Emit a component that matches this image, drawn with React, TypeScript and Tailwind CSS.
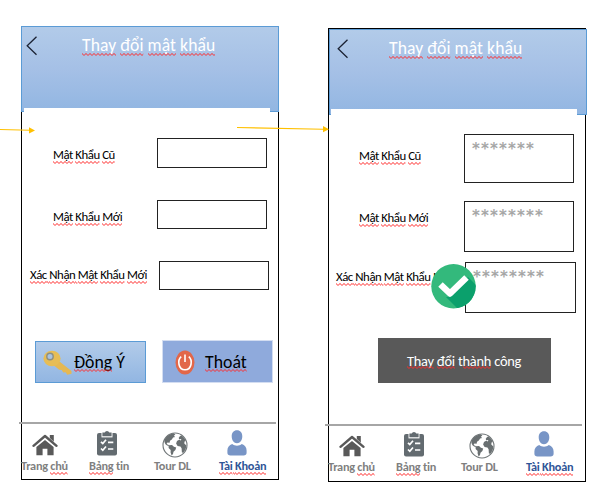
import React from "react";

type Piece = { t: string; wavy?: boolean };

function Squiggle({ id }: { id: string }) {
  return (
    <svg className="absolute left-0 top-full h-[3px] w-full" aria-hidden="true">
      <defs>
        <pattern id={id} width="4" height="3" patternUnits="userSpaceOnUse">
          <path d="M-1 -.5 L2 2.500 L5 -.5" fill="none" stroke="#ff2a2a" strokeWidth="1" />
        </pattern>
      </defs>
      <rect width="100%" height="3" fill={`url(#${id})`} />
    </svg>
  );
}

function Words({ parts, className }: { parts: Piece[]; className: string }) {
  const id = React.useId();
  return (
    <span className={`flex whitespace-pre ${className}`}>
      {parts.map((p, i) => (
        <span key={i} className="relative block">
          {p.t}
          {p.wavy && <Squiggle id={`${id}${i}`} />}
        </span>
      ))}
    </span>
  );
}

const w = (t: string): Piece => ({ t, wavy: true });
const sp: Piece = { t: " " };

function Header({ className, strip, back }: { className: string; strip: string; back: string }) {
  return (
    <header
      className={`flex h-[86px] w-[258px] shrink-0 flex-col border border-[#5b9bd5] bg-linear-to-b from-[#b2cbe9] via-[#a5c0e6] to-[#92b6e2] ${className}`}
    >
      <div className="flex h-[40px] shrink-0">
        <div className={`w-[60px] shrink-0 ${back}`}>
          <svg className="mt-[9px] h-5 w-3" viewBox="0 0 12 20" fill="none" stroke="#1b2233" strokeWidth="1.3">
            <path d="M10.5 .8 L1.2 9.7 L10.5 18.8" />
          </svg>
        </div>
        <Words
          className="mt-[8px] h-[18px] text-[17.600px] leading-[20px] tracking-[0.08px] text-white"
          parts={[w("Thay"), sp, w("đổi"), sp, w("mật"), sp, w("khẩu")]}
        />
      </div>
      <div className={`mt-auto shrink-0 w-[246px] bg-white ${strip}`} />
    </header>
  );
}

function Field({
  label,
  row,
  labelBox,
  box,
  value,
}: {
  label: Piece[];
  row: string;
  labelBox: string;
  box: string;
  value?: string;
}) {
  return (
    <div className={`flex shrink-0 ${row}`}>
      <div className={`shrink-0 ${labelBox}`}>
        <Words className="h-[14px] text-[12.800px] leading-[16px] tracking-[-0.45px] text-black" parts={label} />
      </div>
      <div className={`h-full shrink-0 border border-[#222] bg-white ${box}`}>
        {value && (
          <span className="block pl-[7px] pt-[3px] font-['DejaVu_Sans'] text-[15px] font-bold leading-[22px] tracking-[1.150px] text-[#a6a6a6]">
            {value}
          </span>
        )}
      </div>
    </div>
  );
}

const oldPw = [w("Mật"), sp, w("Khẩu"), sp, w("Cũ")];
const newPw = [w("Mật"), sp, w("Khẩu"), sp, w("Mới")];
const confirmPw = [w("Xác"), w(" "), w("Nhận"), w(" "), w("Mật"), sp, w("Khẩu"), sp, w("Mới")];

function Home() {
  return (
    <svg className="ml-[11px] mt-[2px] h-[22px] w-[26px]" viewBox="0 0 26 22" fill="#595959">
      <path d="M17.8 1h4v6.8l-4-3.7z" />
      <path d="M13 6 21.600 13v8.2h-6.200v-6.400h-4.800v6.400H4.400V13z" />
      <path d="M1.5 11.8 13 2l11.5 9.8" fill="none" stroke="#595959" strokeWidth="2.4" strokeLinecap="round" strokeLinejoin="round" />
    </svg>
  );
}

function Clipboard() {
  return (
    <svg className="ml-[8px] -mt-[2px] h-[26px] w-5" viewBox="0 0 20 26">
      <rect x="0" y="3" width="20" height="22.5" rx="2" fill="#636b70" />
      <path d="M4.5 3h11v4.4h-11z" fill="#fff" />
      <path d="M5.4 2.6h2.3a2.4 2.4 0 0 1 4.6 0h2.3v3.7H5.4z" fill="#636b70" />
      <g fill="none" stroke="#fff">
        <path d="M4 11.8 5.8 13.6 9 9.8M4 18.5l1.8 1.8L9 16.5" strokeWidth="1.7" />
        <path d="M11 12.4h5.3M11 19h5.3" strokeWidth="1.6" />
      </g>
    </svg>
  );
}

function Globe() {
  return (
    <svg className="ml-[8px] h-[26px] w-[26px]" viewBox="0 0 26 26">
      <circle cx="13" cy="13" r="12" fill="#fff" stroke="#707678" strokeWidth="1.1" />
      <g fill="#696f71">
        <path d="M2.2 8.5C3.8 4.5 7.8 1.6 11.6 1.2l1.8 1.2-1.6 1.4 1.3 1.3-2 .5-1.3 2-1.8 1.2-.4 2-2.2-.4-.8 1.6 2 1 .6 1.5-2.4-1.2C3.2 12.4 2.4 10.5 2.2 8.5z" />
        <path d="M6.8 13.3l3.2-.2 1.9 1.6 2.3.8-.8 2.5-1.9 1.7-.5 2.3-1.4 1.5-1-2.9.1-2.5-2.1-2.2z" />
        <path d="M17 4.200l2.600-.8c2 1.400 3.500 3.300 4.300 5.600l-1.400.4-.2 2 2.1 2.2-.8 4-2.3 3.2-1.4-.4-.3-4.1-1.2-1.8-2.8-.5-1.5-2.4.9-2.7 2.1-1.1 1.8.6.4-1.4-2.3.3-.2-1.7 1.4-1.1z" />
      </g>
    </svg>
  );
}

function Person() {
  return (
    <svg className="ml-[8px] -mt-[2px] h-[26px] w-5" viewBox="0 0 20 26" fill="#7895c6">
      <path d="M10 .3c3.3 0 5.3 2.4 5.3 6 0 3.8-2.2 7-5.3 7s-5.3-3.2-5.3-7c0-3.6 2-6 5.3-6z" />
      <path d="M5.2 13.9c2.6 2.3 7 2.3 9.6 0 3 .8 4.8 3.400 4.800 6.700v2.200c0 1.8-1.2 2.6-3 2.6H3.4c-1.8 0-3-.8-3-2.6v-2.2c0-3.3 1.800-5.900 4.800-6.700z" />
    </svg>
  );
}

function NavItem({ icon, parts, className }: { icon: React.ReactNode; parts: Piece[]; className: string }) {
  return (
    <div className={`flex shrink-0 flex-col ${className}`}>
      <div className="h-[26px]">{icon}</div>
      <Words className="h-[14px] text-[12.300px] font-bold leading-[16px] tracking-[-0.25px]" parts={parts} />
    </div>
  );
}

function Nav({ line, items }: { line: string; items: string }) {
  return (
    <nav className="shrink-0">
      <div className={`h-[2px] w-[257px] bg-[#a6a6a6] ${line}`} />
      <div className={`-ml-px flex w-[258px] ${items}`}>
        <NavItem className="w-[68px] text-[#7f7f7f]" icon={<Home />} parts={[{ t: "Trang" }, sp, w("chủ")]} />
        <NavItem className="w-[65px] text-[#7f7f7f]" icon={<Clipboard />} parts={[w("Bảng"), sp, { t: "tin" }]} />
        <NavItem className="w-[65px] text-[#7f7f7f]" icon={<Globe />} parts={[{ t: "Tour DL" }]} />
        <NavItem className="w-[60px] text-[#2f5597]" icon={<Person />} parts={[w("Tài"), w(" "), w("Khoản")]} />
      </div>
    </nav>
  );
}

function Key() {
  return (
    <svg className="ml-[7px] mt-[8px] h-[26px] w-[29px]" viewBox="0 0 29 26">
      <path d="M12 8 28.500 21v2.800l-4.200 1-1.700-2.600-2.400.2-1.500-2.400-2.500-.2-6.200-5z" fill="#e5b853" />
      <ellipse cx="9" cy="8.500" rx="8.600" ry="7.700" fill="#e7bd55" />
      <circle cx="7" cy="6.500" r="3.200" fill="#a9c3e0" stroke="#8d8f80" strokeWidth="1.400" />
    </svg>
  );
}

function Power() {
  return (
    <svg className="ml-[12px] mt-[9px] h-[25px] w-[20px]" viewBox="0 0 20 25" fill="none">
      <ellipse cx="10" cy="12.500" rx="9.500" ry="12" fill="#e2674a" />
      <path d="M6.200 6.600C2.300 10 3 19.800 10 19.800s7.700-9.800 3.800-13.200" stroke="#fff" strokeWidth="1.600" />
      <path d="M10 4.500v7.500" stroke="#fff" strokeWidth="1.600" />
    </svg>
  );
}

export default function App() {
  return (
    <main className="relative flex h-[500px] w-[600px] items-start overflow-hidden bg-white font-['Carlito','Lato',sans-serif]">
      <section className="ml-[21px] mt-[26px] flex h-[454px] w-[258px] shrink-0 flex-col border border-black">
        <Header className="-ml-px -mt-px" back="pl-[4px]" strip="ml-[2px] -mb-px h-[4px]" />
        <Field row="mt-[26px] h-[30px]" labelBox="pl-[31px] pt-[9px] w-[135px]" box="w-[110px]" label={oldPw} />
        <Field row="mt-[32px] h-[29px]" labelBox="pl-[31px] pt-[9px] w-[135px]" box="w-[110px]" label={newPw} />
        <Field row="mt-[32px] h-[29px]" labelBox="pl-[8px] pt-[6px] w-[137px]" box="w-[110px]" label={confirmPw} />
        <div className="mt-[50px] flex h-[43px] shrink-0 pl-[13px]">
          <div className="mt-px flex h-[42px] w-[111px] border border-[#5b9bd5] bg-linear-to-b from-[#b2cbe9] to-[#92b6e2]">
            <Key />
            <Words className="ml-[2px] mt-[9px] h-[18px] text-[17.800px] leading-[22px] text-black" parts={[w("Đồng"), sp, { t: "Ý" }]} />
          </div>
          <div className="ml-[16px] flex h-[43px] w-[111px] border border-[#d3ddf1] bg-[#8faadc]">
            <Power />
            <Words className="ml-[10px] mt-[10px] h-[18px] text-[17.800px] leading-[22px] text-black" parts={[w("Thoát")]} />
          </div>
        </div>
        <div className="h-[39px] shrink-0" />
        <Nav line="-ml-[3px]" items="pt-[8px]" />
      </section>

      <section className="ml-[49px] mt-[28px] flex h-[454px] w-[258px] shrink-0 flex-col border border-black">
        <Header className="" back="-ml-px pl-[8px]" strip="ml-px -mb-px h-[6px]" />
        <Field row="mt-[19px] h-[49px]" labelBox="pl-[30px] pt-[14px] w-[135px]" box="w-[110px]" label={oldPw} value="*******" />
        <Field row="mt-[18px] h-[51px]" labelBox="pl-[30px] pt-[9px] w-[135px]" box="w-[110px]" label={newPw} value="********" />
        <Field row="mt-[10px] h-[51px]" labelBox="pl-[7px] pt-[7px] w-[136px]" box="w-[111px]" label={confirmPw} value="********" />
        <div className="ml-[49px] mt-[25px] flex h-[45px] w-[173px] shrink-0 bg-[#595959]">
          <Words
            className="ml-[29px] mt-[14px] h-[14px] text-[14.400px] leading-[18px] tracking-[-0.24px] text-white"
            parts={[w("Thay"), sp, w("đổi"), sp, { t: "t" }, w("hành"), sp, { t: "công" }]}
          />
        </div>
        <div className="h-[41px] shrink-0" />
        <Nav line="-ml-[4px]" items="pt-[7px]" />
      </section>

      <svg className="absolute left-[431px] top-[264px] h-[45px] w-[45px]" viewBox="0 0 45 45">
        <defs>
          <clipPath id="disc">
            <circle cx="22.500" cy="22.200" r="22.200" />
          </clipPath>
        </defs>
        <circle cx="22.500" cy="22.200" r="22.200" fill="#33b97c" />
        <path d="M19 33 37 13 52 28 38 50 26 44 15 33z" fill="#0ba06c" clipPath="url(#disc)" />
        <path d="M9.500 20.500 19 29.500 35.500 13.500" fill="none" stroke="#fff" strokeWidth="6.500" strokeLinejoin="round" />
      </svg>

      <svg className="absolute left-0 top-[120px] h-[20px] w-[340px]" viewBox="0 0 340 20">
        <g stroke="#ffc000" strokeWidth="1.100">
          <path d="M0 9.500 30 10.300" />
          <path d="M237 7.500 323 9.200" />
        </g>
        <path d="M29 7.300v6.200l6-3zM323 6v6.200l6-3z" fill="#ffc000" />
      </svg>
    </main>
  );
}
